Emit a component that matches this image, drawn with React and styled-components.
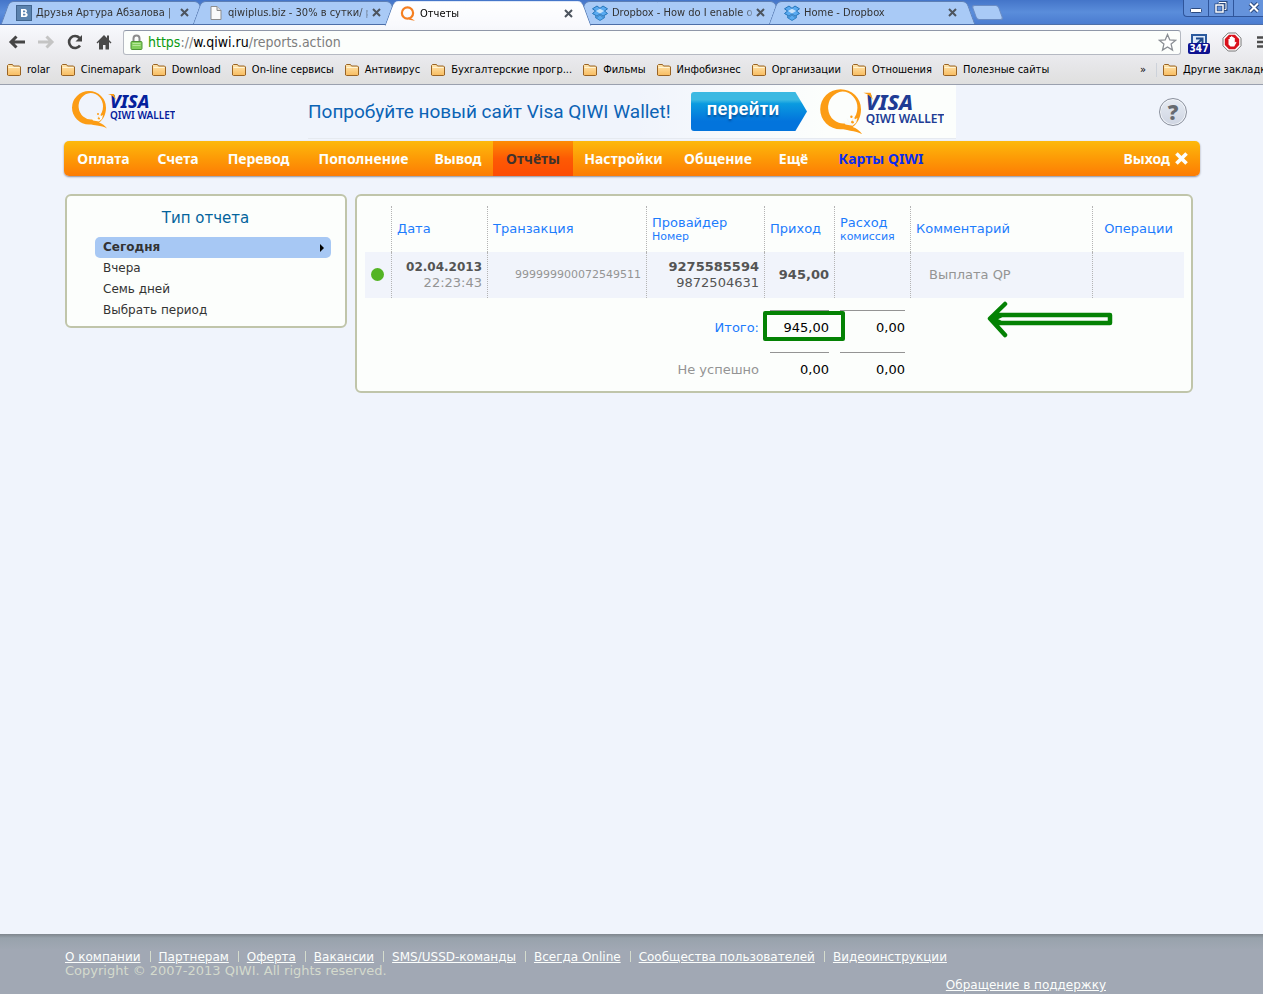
import React from "react";
import styled, { createGlobalStyle, css } from "styled-components";

const GlobalStyle = createGlobalStyle`
  * { box-sizing: border-box; }
  body {
    margin: 0;
    background: #f0f4fc;
    font-family: "DejaVu Sans", Verdana, sans-serif;
    font-size: 13px;
    color: #333;
  }
  button { font: inherit; color: inherit; background: none; border: 0; padding: 0; cursor: pointer; }
  a { color: inherit; text-decoration: none; }
  svg { display: block; flex: none; }
`;

const Screen = styled.div`
  min-height: 100vh;
  display: flex;
  flex-direction: column;
  overflow: hidden;
`;

/* ---------- browser window ---------- */

const uiFont = css`
  font-family: "DejaVu Sans Condensed", Tahoma, sans-serif;
  font-size: 11px;
  line-height: 14px;
`;

const TabStrip = styled.div`
  ${uiFont}
  display: flex;
  height: 25px;
  padding-left: 8px;
  background: linear-gradient(#4475c9, #5a8ddb 50%, #4a7bd0);
  border-bottom: 1px solid #4c6ea8;
`;

const Tab = styled.div`
  position: relative;
  z-index: ${(p) => (p.$active ? 2 : 1)};
  flex: 0 1 192px;
  min-width: 0;
  height: ${(p) => (p.$active ? 25 : 23)}px;
  margin-top: 1px;
  padding: 0 10px 0 8px;
  display: flex;
  align-items: center;
  color: ${(p) => (p.$active ? "#000" : "#333")};

  &::before,
  &::after {
    content: "";
    position: absolute;
    z-index: -1;
    top: 0;
    bottom: 0;
    background: ${(p) => (p.$active ? "linear-gradient(#fff, #f8f9fd)" : "#a9caf6")};
    border-top: 1px solid ${(p) => (p.$active ? "#dfe8f8" : "#5d7fb5")};
  }
  &::before {
    left: -3px;
    right: 40%;
    border-left: 1px solid #5d7fb5;
    border-radius: 5px 0 0 0;
    transform: skewX(-20deg);
  }
  &::after {
    left: 40%;
    right: -3px;
    border-right: 1px solid #5d7fb5;
    border-radius: 0 5px 0 0;
    transform: skewX(20deg);
  }
`;

const TabTitle = styled.span`
  flex: 1;
  min-width: 0;
  margin: 0 4px;
  overflow: hidden;
  white-space: nowrap;
  mask-image: linear-gradient(90deg, #000 130px, transparent 145px);
`;

const TabClose = styled.button`
  width: 10px;
  height: 10px;
`;

const NewTab = styled.button`
  width: 27px;
  height: 15px;
  margin: 5px 0 0 6px;
  background: #a9caf6;
  border: 1px solid #6a8cc4;
  border-radius: 3px;
  transform: skewX(20deg);
`;

const WindowButtons = styled.div`
  display: flex;
  flex: 0 0 80px;
  height: 17px;
  margin-left: auto;
  overflow: hidden;
  background: #6593dc;
  border: 1px solid #2f559b;
  border-width: 0 0 1px 1px;
  border-radius: 0 0 0 4px;
`;

const WindowButton = styled.button`
  flex: 0 0 ${(p) => p.$w}px;
  display: flex;
  justify-content: center;
  border-right: 1px solid #2f559b;
`;

const Toolbar = styled.div`
  display: flex;
  align-items: center;
  height: 34px;
  padding-left: 7px;
  background: linear-gradient(#f8f9fd, #e9e9ec);
`;

const ToolButton = styled.button`
  flex: none;
  width: 20px;
  height: 20px;
  margin-right: 9px;
  display: flex;
  align-items: center;
  justify-content: center;
`;

const AddressBar = styled.label`
  flex: 1;
  min-width: 0;
  height: 25px;
  display: flex;
  align-items: center;
  gap: 5px;
  padding: 0 3px 0 6px;
  background: #fcfefc;
  border: 1px solid #b5b9c2;
  border-top-color: #8f97a8;
  border-radius: 3px;
`;

const Address = styled.span`
  flex: 1;
  min-width: 0;
  overflow: hidden;
  white-space: nowrap;
  font: 14px/18px "DejaVu Sans Condensed", Tahoma, sans-serif;
  color: #7d7d7d;
  b { font-weight: 400; color: #000; }
  i { font-style: normal; color: #0a9a10; }
`;

const Extensions = styled.div`
  flex: 0 0 82px;
  display: flex;
  align-items: center;
  gap: 12px;
  padding-left: 7px;
  overflow: hidden;
`;

const Counter = styled.button`
  position: relative;
  flex: none;
  width: 22px;
  height: 24px;
  padding: 2px 3px;
`;

const CounterBadge = styled.span`
  position: absolute;
  left: 0;
  right: 0;
  bottom: 0;
  border-radius: 2px;
  background: #0d1290;
  color: #fff;
  font: bold 10px/11px "DejaVu Sans Condensed", sans-serif;
  text-align: center;
`;

const Bookmarks = styled.div`
  ${uiFont}
  display: flex;
  align-items: center;
  height: 26px;
  padding: 0 0 3px 6px;
  background: linear-gradient(#e9e9ec, #dfdfdf);
  border-bottom: 1px solid #9aa0ae;
  color: #000;
  white-space: nowrap;
`;

const BookmarkList = styled.div`
  flex: 1;
  min-width: 0;
  display: flex;
  gap: 10px;
  overflow: hidden;
`;

const Bookmark = styled.a`
  display: flex;
  align-items: center;
  gap: 5px;
  flex: none;
`;

const MoreBookmarks = styled.button`
  margin: 0 10px;
`;

const OtherBookmarks = styled.div`
  flex: 0 0 107px;
  overflow: hidden;
  padding-left: 5px;
  border-left: 1px solid #cdd2da;
`;

/* ---------- site ---------- */

const Header = styled.header`
  display: flex;
  align-items: flex-start;
  height: 56px;
  padding: 0 76px 0 71px;
`;

const LogoLink = styled.a`
  flex: none;
  padding-top: 5px;
`;

const Banner = styled.div`
  flex: 0 1 648px;
  min-width: 0;
  height: 54px;
  margin: 0 auto 0 133px;
  display: flex;
  align-items: center;
  background: linear-gradient(90deg, rgba(252, 254, 252, 0) 50%, #fcfefc 80%);
  border-bottom: 1px solid #e6eaf0;
`;

const BannerText = styled.span`
  flex: 0 0 383px;
  white-space: nowrap;
  font: 19px/24px Roboto, sans-serif;
  color: #0b63b5;
`;

const GoButton = styled.button`
  flex: none;
  width: 116px;
  height: 39px;
  margin-right: 12px;
  padding: 0 12px 5px 0;
  background: linear-gradient(#3cb9e2 0 20%, #0a9be0 30%, #0374dc 75%);
  border-radius: 3px;
  clip-path: polygon(0 0, 90% 0, 100% 50%, 90% 100%, 0 100%);
  color: #fff;
  font: bold 18px/24px "Liberation Sans", Arial, sans-serif;
  text-shadow: 0 2px 2px rgba(0, 40, 100, 0.5);
`;

const HelpButton = styled.button`
  flex: none;
  width: 28px;
  height: 28px;
  margin-top: 13px;
  border: 1px solid #8b909c;
  border-radius: 50%;
  background: linear-gradient(#e6ebf3, #cfd5e2);
  box-shadow: inset 0 0 0 1px #f4f7fb;
  color: #666a70;
  font: 900 21px/24px "Noto Sans", sans-serif;
`;

const Nav = styled.nav`
  display: flex;
  height: 35px;
  margin: 0 63px 0 64px;
  border-radius: 5px;
  background: linear-gradient(#fdb90c, #fd9a06 50%, #fd7c04);
  box-shadow: 0 1px 2px #8e8e9a;
  font: bold 14px/36px "Noto Sans", sans-serif;
  color: #fcfefc;
  white-space: nowrap;
`;

const NavLink = styled.a`
  flex: 0 0 ${(p) => p.$w}px;
  text-align: center;
  ${(p) => p.$active && css`
    background: linear-gradient(#fd8c04, #fd5a04 50%, #fd4c04);
    color: #40322c;
  `}
  ${(p) => p.$special && css`
    color: #0c2cf0;
  `}
`;

const Logout = styled.a`
  display: flex;
  align-items: center;
  gap: 5px;
  margin-left: auto;
  padding-right: 12px;
`;

const Main = styled.main`
  flex: 1;
  display: flex;
  align-items: flex-start;
  gap: 8px;
  padding: 18px 70px 32px 65px;
`;

const Panel = styled.section`
  background: #fcfefc;
  border: 2px solid #c0c5aa;
  border-radius: 6px;
`;

const Sidebar = styled(Panel)`
  flex: 0 0 282px;
  padding: 12px 14px 5px 28px;
`;

const SideTitle = styled.h2`
  margin: 0 15px 8px 0;
  font-size: 15px;
  line-height: 21px;
  font-weight: 400;
  color: #04649c;
  text-align: center;
`;

const SideLink = styled.a`
  display: flex;
  align-items: center;
  justify-content: space-between;
  padding: 0 7px 0 8px;
  border-radius: 5px;
  font-size: 12px;
  line-height: 21px;
  ${(p) => p.$active && css`
    background: #a7c8f4;
    font-weight: bold;
  `}
`;

const Report = styled(Panel)`
  flex: 1;
  min-width: 0;
  padding: 10px 7px 9px 8px;
`;

const Table = styled.table`
  width: 100%;
  table-layout: fixed;
  border-collapse: separate;
  border-spacing: 0;
`;

const Col = styled.col`
  width: ${(p) => (p.$w ? `${p.$w}px` : "auto")};
`;

const dotted = css`
  border-right: 1px dotted #b4b4b4;
  &:last-child { border-right: 0; }
`;

const Th = styled.th`
  ${dotted}
  height: 46px;
  padding: 0 5px;
  font-weight: 400;
  line-height: 14px;
  color: #1c7cfc;
  text-align: ${(p) => p.$align || "left"};
  white-space: nowrap;
`;

const SubLabel = styled.small`
  display: block;
  font-size: 11px;
  line-height: 13px;
`;

const Td = styled.td`
  ${dotted}
  height: 46px;
  padding: 0 5px;
  background: #f1f4fb;
  line-height: 16px;
  color: ${(p) => (p.$muted ? "#949494" : "#545454")};
  font-size: ${(p) => p.$size || 13}px;
  text-align: ${(p) => p.$align || "right"};
  white-space: nowrap;
`;

const Comment = styled.span`
  padding-left: 13px;
`;

const DateStrong = styled.strong`
  font-size: 12px;
  color: #545454;
`;

const StatusDot = styled.span`
  display: block;
  width: 13px;
  height: 13px;
  margin: 0 0 2px 1px;
  border-radius: 50%;
  background: #54b424;
`;

const SumCell = styled.td`
  position: relative;
  height: 42px;
  padding: 12px 6px 0 5px;
  vertical-align: top;
  text-align: right;
  color: #000;
`;

const SumLabel = styled.th`
  padding: 12px 6px 0 5px;
  font-weight: 400;
  vertical-align: top;
  text-align: right;
  color: ${(p) => (p.$muted ? "#949494" : "#1c7cfc")};
`;

const Sum = styled.span`
  display: block;
  height: 30px;
  border-top: 1px solid ${(p) => (p.$plain ? "transparent" : "#949494")};
  line-height: 34px;
`;

const SumMark = styled.span`
  position: absolute;
  left: -2px;
  top: 13px;
  width: 82px;
  height: 30px;
  border: 4px solid #048204;
  border-radius: 2px;
`;

const ArrowMark = styled.svg`
  position: absolute;
  left: 76px;
  top: 2px;
`;

const Footer = styled.footer`
  height: 60px;
  padding: 16px 65px 0;
  background: linear-gradient(#7f868e, #98a2ac 4px, #a1a8b4 16px, #a1a8b4);
  font-size: 12px;
  line-height: 14px;
  color: #fcfefc;
`;

const FooterLinks = styled.nav`
  display: flex;
  white-space: nowrap;
`;

const FooterItem = styled.span`
  & + & {
    margin-left: 9px;
  }
  & + &::before {
    content: "";
    display: inline-block;
    width: 1px;
    height: 11px;
    margin-right: 8px;
    background: #d5dccd;
    vertical-align: -1px;
  }
`;

const FooterLink = styled.a`
  text-decoration: underline;
`;

const Copyright = styled.p`
  margin: 0;
  font-size: 13px;
  color: #d4dacd;
`;

const Support = styled.p`
  margin: 0 92px 0 0;
  text-align: right;
`;

/* ---------- icons ---------- */

const CloseIcon = ({ size = 9, color = "#4c545e", weight = 2 }) => (
  <svg width={size} height={size} viewBox="0 0 9 9" aria-hidden="true">
    <path d="M1 1l7 7M8 1L1 8" stroke={color} strokeWidth={weight} />
  </svg>
);

const VkIcon = () => (
  <svg width="16" height="16" viewBox="0 0 16 16" aria-hidden="true">
    <rect x=".5" y=".5" width="15" height="15" fill="#5b83ae" stroke="#41658f" />
    <path d="M5 4h4a2 2 0 0 1 1 3.700A2.200 2.200 0 0 1 9 12H5zm2 1.500v1.700h1.500a.8.8 0 0 0 0-1.700zm0 3.200v1.800h1.600a.9.9 0 0 0 0-1.800z" fill="#fff" fillRule="evenodd" />
  </svg>
);

const PageIcon = () => (
  <svg width="16" height="16" viewBox="0 0 16 16" aria-hidden="true">
    <path d="M3 1.500h6l4 4v9H3z" fill="#fafafa" stroke="#8d8d8d" />
    <path d="M9 1.500v4h4" fill="#ddd" stroke="#8d8d8d" />
  </svg>
);

const QiwiIcon = () => (
  <svg width="16" height="16" viewBox="0 0 16 16" aria-hidden="true">
    <circle cx="7.500" cy="7" r="5.600" fill="none" stroke="#f57f20" strokeWidth="2.200" />
    <path d="M8 11.500c3 .5 5 1.500 7 3.500-2-.7-4-.7-6-1.500z" fill="#f57f20" />
  </svg>
);

const DropboxIcon = () => (
  <svg width="16" height="16" viewBox="0 0 16 16" aria-hidden="true">
    <path d="M5 1L8 3.300 11 1l4.500 2.800-3 2.200 3 2.500-4.500 2.700-3-2.400-3 2.400L.5 8.500l3-2.500-3-2.200z" fill="#5aaaf0" stroke="#2273b8" />
    <path d="M8 3.800L12 6 8 8.400 4 6z" fill="#c8e2fa" />
    <path d="M3.500 11.300L5 12.300l3-2.400 3 2.400 1.500-1v1.400L8 15.500l-4.500-2.800z" fill="#5aaaf0" stroke="#2273b8" strokeWidth=".8" />
  </svg>
);

const FolderIcon = () => (
  <svg width="16" height="14" viewBox="0 0 16 14" aria-hidden="true">
    <defs>
      <linearGradient id="folder" x1="0" x2="0" y1="0" y2="1">
        <stop offset="0" stopColor="#ffe6b0" />
        <stop offset="1" stopColor="#f8bc60" />
      </linearGradient>
    </defs>
    <path d="M1.500 12V2.500l1-1h4l1 1.500h6l1 1V12l-1 .5h-11z" fill="url(#folder)" stroke="#9a6424" />
    <path d="M2.500 4.500h11" stroke="#fff4d4" />
  </svg>
);

const LockIcon = () => (
  <svg width="13" height="16" viewBox="0 0 13 16" aria-hidden="true">
    <path d="M3.500 8V4.500a3 3 0 0 1 6 0V8" fill="none" stroke="#8c8c8c" strokeWidth="2" />
    <rect x="1" y="7.500" width="11" height="8" rx="1" fill="#83cf5c" stroke="#4d9436" />
    <path d="M2.500 9.500h8M2.500 11.500h8" stroke="#b5e79a" />
  </svg>
);

const QiwiLogo = ({ scale = 1, navy = "#04209c" }) => (
  <svg width={104 * scale} height={40 * scale} viewBox="0 0 104 40" role="img" aria-label="Visa QIWI Wallet">
    <path d="M18 1a17 16.700 0 1 0 0 33.400c3 0 6 .6 8 1.200 4 .4 7 1.200 10 3-2-3-5-5-8-6 4-3 7-8 7-14.900A17 16.700 0 0 0 18 1zm1.500 2A12.600 13.300 0 0 1 32 16.500c0 4-1.500 8-4.500 10.500l-2 3-4-.5A12.500 13.300 0 1 1 19.500 3z" fill="#fc9c14" fillRule="evenodd" />
    <path d="M20 27l4 2-1-4 4 4 2-5 1 2 2-1-1 4-3 2.500-6-1z" fill="#f8faf8" />
    <circle cx="27" cy="24" r="1" fill="#fc9c14" />
    <circle cx="28" cy="28.500" r="1" fill="#fc9c14" />
    <text x="39" y="18" fill={navy} fontFamily="Noto Sans, sans-serif" fontSize="18" fontWeight="800" fontStyle="italic">VISA</text>
    <path d="M37 4h6l2 6c-2-3-4-5-8-6z" fill="#fc9c14" />
    <text x="39" y="29" fill={navy} fontFamily="Noto Sans, sans-serif" fontSize="10" fontWeight="600">QIWI WALLET</text>
  </svg>
);

/* ---------- data ---------- */

const tabs = [
  { icon: VkIcon, title: "Друзья Артура Абзалова |" },
  { icon: PageIcon, title: "qiwiplus.biz - 30% в сутки/ р" },
  { icon: QiwiIcon, title: "Отчеты", active: true },
  { icon: DropboxIcon, title: "Dropbox - How do I enable o" },
  { icon: DropboxIcon, title: "Home - Dropbox" },
];

const bookmarks = ["rolar", "Cinemapark", "Download", "On-line сервисы", "Антивирус", "Бухгалтерские прогр...", "Фильмы", "Инфобизнес", "Организации", "Отношения", "Полезные сайты"];

const navItems = [
  { title: "Оплата", width: 79 },
  { title: "Счета", width: 70 },
  { title: "Перевод", width: 91 },
  { title: "Пополнение", width: 119 },
  { title: "Вывод", width: 70 },
  { title: "Отчёты", width: 80, active: true },
  { title: "Настройки", width: 101 },
  { title: "Общение", width: 88 },
  { title: "Ещё", width: 63 },
  { title: "Карты QIWI", width: 112, special: true },
];

const periods = ["Сегодня", "Вчера", "Семь дней", "Выбрать период"];

const footerItems = ["О компании", "Партнерам", "Оферта", "Вакансии", "SMS/USSD-команды", "Всегда Online", "Сообщества пользователей", "Видеоинструкции"];

function Browser() {
  return (
    <>
      <TabStrip>
        {tabs.map(({ icon: Icon, title, active }) => (
          <Tab key={title} $active={active}>
            <Icon />
            <TabTitle>{title}</TabTitle>
            <TabClose aria-label="Закрыть вкладку"><CloseIcon /></TabClose>
          </Tab>
        ))}
        <NewTab aria-label="Новая вкладка" />
        <WindowButtons>
          <WindowButton $w={25} aria-label="Свернуть">
            <svg width="13" height="15" viewBox="0 0 13 15"><rect x=".5" y="8.500" width="11" height="4" rx="1" fill="#fff" stroke="#2b4a80" /></svg>
          </WindowButton>
          <WindowButton $w={25} aria-label="Развернуть">
            <svg width="14" height="15" viewBox="0 0 14 15" fill="none">
              <path d="M5 2.500h7v7h-2M5 2.500v2" stroke="#2b4a80" strokeWidth="3" />
              <path d="M5 2.500h7v7h-2M5 2.500v2" stroke="#fff" />
              <rect x="2" y="5" width="7" height="7" stroke="#2b4a80" strokeWidth="3" />
              <rect x="2" y="5" width="7" height="7" stroke="#fff" strokeWidth="1.500" />
            </svg>
          </WindowButton>
          <WindowButton $w={41} aria-label="Закрыть">
            <svg width="12" height="15" viewBox="0 0 12 15">
              <path d="M2 3.500l8 8M10 3.500l-8 8" stroke="#2b4a80" strokeWidth="4" />
              <path d="M2 3.500l8 8M10 3.500l-8 8" stroke="#fff" strokeWidth="2" />
            </svg>
          </WindowButton>
        </WindowButtons>
      </TabStrip>

      <Toolbar>
        <ToolButton aria-label="Назад">
          <svg width="18" height="14" viewBox="0 0 18 14"><path d="M17 7H3M8.500 1.500L3 7l5.500 5.500" fill="none" stroke="#454545" strokeWidth="3" /></svg>
        </ToolButton>
        <ToolButton aria-label="Вперёд">
          <svg width="18" height="14" viewBox="0 0 18 14"><path d="M1 7h14M9.500 1.500L15 7l-5.500 5.500" fill="none" stroke="#c4c4c4" strokeWidth="3" /></svg>
        </ToolButton>
        <ToolButton aria-label="Обновить">
          <svg width="16" height="16" viewBox="0 0 16 16"><path d="M13 11.500a6 6 0 1 1-.5-7.500" fill="none" stroke="#454545" strokeWidth="2.600" /><path d="M15 1v6.500H8.500z" fill="#454545" /></svg>
        </ToolButton>
        <ToolButton aria-label="Домой">
          <svg width="16" height="16" viewBox="0 0 16 16"><path d="M8 1L0.500 8.500l1 1L3 8v7.500h4V11h2.500v4.500H13V8l1.500 1.500 1-1L13 6V1.500h-2V4z" fill="#4a4a4a" /></svg>
        </ToolButton>
        <AddressBar>
          <LockIcon />
          <Address><i>https</i>://<b>w.qiwi.ru</b>/reports.action</Address>
          <svg width="19" height="19" viewBox="0 0 19 19"><path d="M9.500 1.500l2.300 5.500 5.700.4-4.400 3.700 1.400 5.900-5-3.100-5 3.100 1.400-5.900L1.500 7.400 7.200 7z" fill="#fff" stroke="#8a8e94" strokeWidth="1.300" /></svg>
        </AddressBar>
        <Extensions>
          <Counter aria-label="Расширение">
            <svg width="16" height="16" viewBox="0 0 16 16"><rect x="1" y="1" width="14" height="14" fill="#dfeafa" stroke="#2c5a9e" strokeWidth="2" /><path d="M5 4.500h6.500V11M11 5l-7 7" stroke="#1f4a8c" strokeWidth="2" fill="none" /></svg>
            <CounterBadge>347</CounterBadge>
          </Counter>
          <svg width="20" height="20" viewBox="0 0 20 20">
            <path d="M6.200 1h7.600L19 6.200v7.600L13.800 19H6.200L1 13.800V6.200z" fill="#fff" stroke="#777" />
            <path d="M7 2.800h6L17.200 7v6L13 17.200H7L2.800 13V7z" fill="#d9121c" />
            <path d="M6.500 10V7h1.200V5h1.300V4.300h1.300V5h1.300v1h1.200v4.500l1-.8.700.7-2.300 4H8.500L6.500 12.500z" fill="#fff" />
          </svg>
          <svg width="15" height="12" viewBox="0 0 15 12"><path d="M3 1.500h12M3 6h12M3 10.500h12" stroke="#4c4c4c" strokeWidth="2.400" /></svg>
        </Extensions>
      </Toolbar>

      <Bookmarks>
        <BookmarkList>
          {bookmarks.map((name) => (
            <Bookmark key={name} href="#"><FolderIcon />{name}</Bookmark>
          ))}
        </BookmarkList>
        <MoreBookmarks>»</MoreBookmarks>
        <OtherBookmarks>
          <Bookmark href="#"><FolderIcon />Другие закладки</Bookmark>
        </OtherBookmarks>
      </Bookmarks>
    </>
  );
}

function ReportTable() {
  return (
    <Table>
      <colgroup>
        <Col $w={27} /><Col $w={96} /><Col $w={159} /><Col $w={118} /><Col $w={70} /><Col $w={76} /><Col /><Col $w={91} />
      </colgroup>
      <thead>
        <tr>
          <Th />
          <Th>Дата</Th>
          <Th>Транзакция</Th>
          <Th>Провайдер<SubLabel>Номер</SubLabel></Th>
          <Th>Приход</Th>
          <Th>Расход<SubLabel>комиссия</SubLabel></Th>
          <Th>Комментарий</Th>
          <Th $align="center">Операции</Th>
        </tr>
      </thead>
      <tbody>
        <tr>
          <Td><StatusDot /></Td>
          <Td $muted><DateStrong>02.04.2013</DateStrong><br />22:23:43</Td>
          <Td $muted $size={11}>999999900072549511</Td>
          <Td><strong>9275585594</strong><br />9872504631</Td>
          <Td><strong>945,00</strong></Td>
          <Td />
          <Td $muted $align="left"><Comment>Выплата QP</Comment></Td>
          <Td />
        </tr>
      </tbody>
      <tfoot>
        <tr>
          <SumLabel colSpan={4}><Sum $plain>Итого:</Sum></SumLabel>
          <SumCell><Sum>945,00</Sum><SumMark /></SumCell>
          <SumCell><Sum>0,00</Sum></SumCell>
          <SumCell colSpan={2}>
            <ArrowMark width="127" height="40" viewBox="0 0 127 40" aria-hidden="true">
              <path d="M18 4L3 18.500 18 35M7 15h116v8H10M15 15l-9 4 8 4" fill="none" stroke="#048204" strokeWidth="4.500" strokeLinecap="round" strokeLinejoin="round" />
            </ArrowMark>
          </SumCell>
        </tr>
        <tr>
          <SumLabel colSpan={4} $muted><Sum $plain>Не успешно</Sum></SumLabel>
          <SumCell><Sum>0,00</Sum></SumCell>
          <SumCell><Sum>0,00</Sum></SumCell>
          <SumCell colSpan={2} />
        </tr>
      </tfoot>
    </Table>
  );
}

export default function App() {
  return (
    <Screen>
      <GlobalStyle />
      <Browser />
      <Header>
        <LogoLink href="#"><QiwiLogo /></LogoLink>
        <Banner>
          <BannerText>Попробуйте новый сайт Visa QIWI Wallet!</BannerText>
          <GoButton>перейти</GoButton>
          <QiwiLogo scale={1.2} navy="#203c94" />
        </Banner>
        <HelpButton>?</HelpButton>
      </Header>
      <Nav>
        {navItems.map(({ title, width, active, special }) => (
          <NavLink key={title} href="#" $w={width} $active={active} $special={special}>{title}</NavLink>
        ))}
        <Logout href="#">Выход <CloseIcon size={13} color="#fcfefc" weight={2.5} /></Logout>
      </Nav>
      <Main>
        <Sidebar>
          <SideTitle>Тип отчета</SideTitle>
          {periods.map((period, i) => (
            <SideLink key={period} href="#" $active={i === 0}>
              {period}
              {i === 0 && <svg width="4" height="8" viewBox="0 0 4 8"><path d="M0 0l4 4-4 4z" fill="#000" /></svg>}
            </SideLink>
          ))}
        </Sidebar>
        <Report><ReportTable /></Report>
      </Main>
      <Footer>
        <FooterLinks>
          {footerItems.map((item) => (
            <FooterItem key={item}><FooterLink href="#">{item}</FooterLink></FooterItem>
          ))}
        </FooterLinks>
        <Copyright>Copyright © 2007-2013 QIWI. All rights reserved.</Copyright>
        <Support><FooterLink href="#">Обращение в поддержку</FooterLink></Support>
      </Footer>
    </Screen>
  );
}
